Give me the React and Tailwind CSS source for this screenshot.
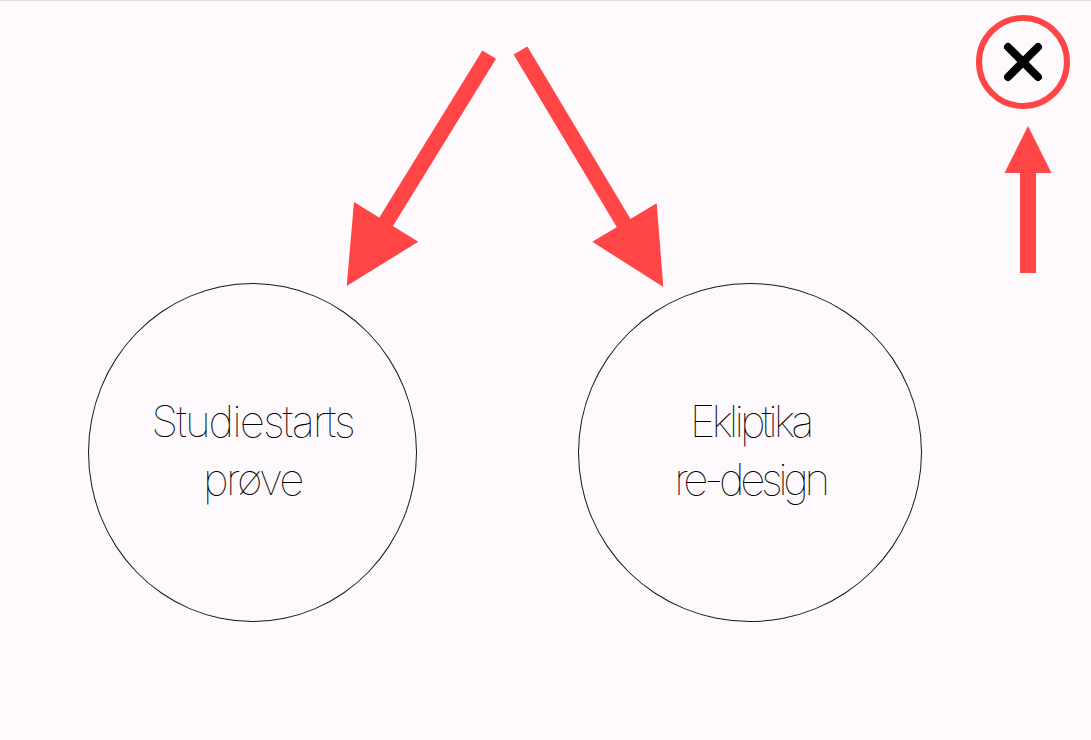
import React from "react";

function Arrows() {
  const red = "#ff4545";
  return (
    <svg
      className="absolute inset-0 pointer-events-none"
      width="1091"
      height="740"
      viewBox="0 0 1091 740"
    >
      <line x1="489.2" y1="53.6" x2="378" y2="234" stroke={red} strokeWidth="16" />
      <polygon points="354,201 418.3,240.7 346.7,285" fill={red} />
      <line x1="520.5" y1="49.5" x2="632" y2="236" stroke={red} strokeWidth="16" />
      <polygon points="656.7,202.3 592.3,240.7 663.3,286" fill={red} />
      <rect x="1020" y="168" width="16" height="104" fill={red} />
      <polygon points="1028,125 1004.5,172 1051.5,172" fill={red} />
    </svg>
  );
}

function Bubble({ w, lines }) {
  return (
    <div
      className={`${w} h-[339px] rounded-[50%] border border-[#1a1a1a] flex flex-col items-center justify-center`}
    >
      <div className="text-[44px] leading-[58px] font-thin text-black text-center font-['Inter','Helvetica_Neue',sans-serif] -mt-[6px]">
        {lines.map((l) => (
          <div key={l.t} className={l.c}>
            {l.t}
          </div>
        ))}
      </div>
    </div>
  );
}

export default function App() {
  return (
    <div className="relative w-full h-[740px] bg-[#fdf9fc] border-t border-[#e0e0e0] overflow-hidden">
      <div className="flex justify-end pt-[14px] pr-[21px]">
        <button className="w-[94px] h-[94px] rounded-full border-[6px] border-[#ff4545] flex items-center justify-center">
          <svg width="42" height="42" viewBox="0 0 42 42">
            <line x1="6" y1="6" x2="36" y2="36" stroke="#000" strokeWidth="8" strokeLinecap="round" />
            <line x1="36" y1="6" x2="6" y2="36" stroke="#000" strokeWidth="8" strokeLinecap="round" />
          </svg>
        </button>
      </div>
      <div className="flex pl-[88px] gap-[161px] mt-[174px]">
        <Bubble
          w="w-[329px]"
          lines={[
            { t: "Studiestarts", c: "tracking-[-0.045em]" },
            { t: "prøve", c: "tracking-[-0.06em]" },
          ]}
        />
        <Bubble
          w="w-[344px]"
          lines={[
            { t: "Ekliptika", c: "tracking-[-0.09em]" },
            { t: "re-design", c: "tracking-[-0.1em]" },
          ]}
        />
      </div>
      <Arrows />
    </div>
  );
}
